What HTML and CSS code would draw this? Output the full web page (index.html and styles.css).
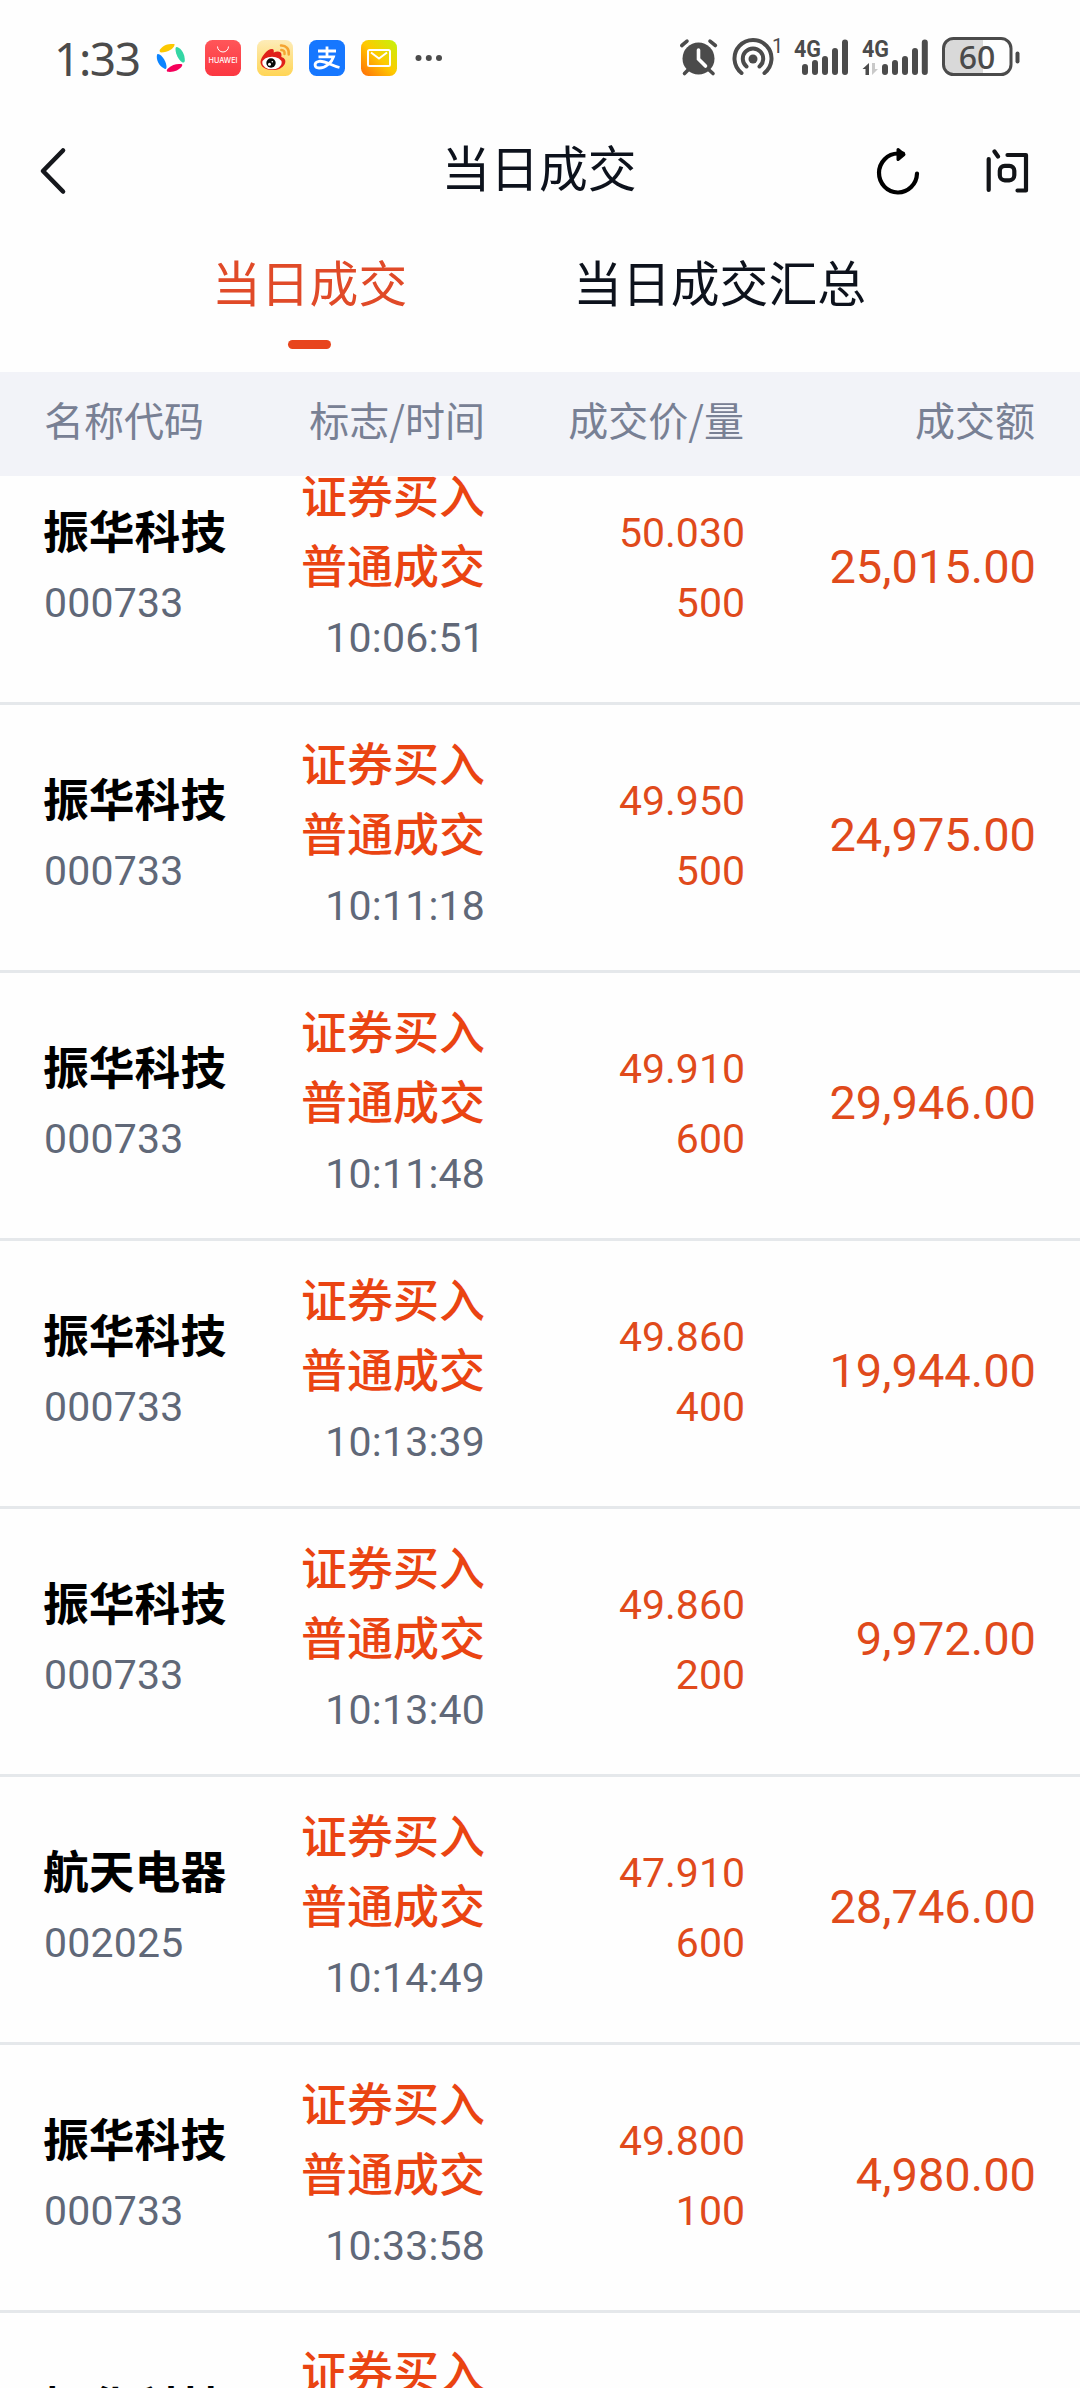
FILE: index.html
```html
<!DOCTYPE html>
<html lang="zh-CN">
<head>
<meta charset="utf-8">
<title>当日成交</title>
<link rel="stylesheet" href="styles.css">
</head>
<body>
<div class="screen">
  <div class="status">
    <div class="status-left">
      <span class="clock">1:33</span>
      <svg class="app app-round" width="32" height="36" viewBox="0 0 32 36">
        <path fill="#fcc800" d="M5 9.500C9 4.500 13 3.800 19.500 4L19.500 5C18.500 9 13.500 12 6 12.500C4.500 12 4.300 10.500 5 9.500z"/>
        <path fill="#33d6a4" d="M22 7C26.500 8.500 30 14 29.800 21C29 23.500 27 22.500 25.500 21C22 17.500 20.500 12 20.500 9C20.500 7.500 21 6.800 22 7z"/>
        <path fill="#f5005a" d="M27 26C24 30.500 18.500 32.500 12.500 31.800C11 31 12 29.500 13 28.500C17 24.500 21.500 23.500 26 24C27.500 24.300 27.500 25 27 26z"/>
        <path fill="#0b84ff" d="M2.500 14C5 13.500 9 18 10.800 23C11.800 26.500 12 29 10 29C5.500 27 1.800 22 1.800 17C1.800 15.500 2 14.500 2.500 14z"/>
      </svg>
      <svg class="app" width="36" height="36" viewBox="0 0 36 36">
        <defs><linearGradient id="red" x2="0" y2="1"><stop stop-color="#ff5659"/><stop offset="1" stop-color="#fb3741"/></linearGradient></defs>
        <rect width="36" height="36" rx="7.500" fill="url(#red)"/>
        <path d="M12.500 6.500a5.500 5.500 0 0 0 11 0" fill="none" stroke="#fff" stroke-width="1"/>
        <text x="18" y="23" class="brand" textLength="29" lengthAdjust="spacingAndGlyphs">HUAWEI</text>
      </svg>
      <svg class="app" width="36" height="36" viewBox="0 0 36 36">
        <defs><linearGradient id="cream" x2="0" y2="1"><stop stop-color="#fdecb8"/><stop offset="1" stop-color="#ffd555"/></linearGradient></defs>
        <rect width="36" height="36" rx="7.500" fill="url(#cream)"/>
        <path fill="#e01f19" d="M3.500 22C4 17 10 9 15 9C17 9 17 11 16.700 12.500C20 11 24.500 11 24.500 15L24.300 17C28 18 29.500 21 27.500 24.500C25 28.500 20 30.500 14.500 30C8 29.500 3.500 26.500 3.500 22z"/>
        <ellipse cx="15" cy="23" rx="9.700" ry="6.300" fill="#fff"/>
        <circle cx="14" cy="23" r="4.700" fill="#090909"/><circle cx="12.500" cy="24.200" r="1.500" fill="#fff"/><circle cx="15.300" cy="21.700" r=".8" fill="#fff"/>
        <g fill="none" stroke="#f5a431" stroke-width="2.500" stroke-linecap="round"><path d="M24 5.500c5-.3 8.500 3.500 7.700 9"/><path d="M24.300 10c2.400 0 3.600 1.600 3.200 4"/></g>
      </svg>
      <svg class="app" width="36" height="36" viewBox="0 0 36 36">
        <rect width="36" height="36" rx="7.500" fill="#1677ff"/>
        <path d="M9 11h18M18 6.500v10M9.500 16.800h15C23 22 16.500 28.300 10 28C5 27.800 4.500 22.300 10 21.300C16 20.500 22 25.300 30.500 27.500" fill="none" stroke="#fff" stroke-width="2.800"/>
      </svg>
      <svg class="app" width="36" height="36" viewBox="0 0 36 36">
        <defs><linearGradient id="sun" x1="0" y1="1" x2="1" y2="0"><stop offset=".08" stop-color="#ff7a08"/><stop offset=".5" stop-color="#ffc900"/><stop offset="1" stop-color="#c2f50c"/></linearGradient></defs>
        <rect width="36" height="36" rx="7.500" fill="url(#sun)"/>
        <rect x="7" y="10" width="22" height="16" rx="1.500" fill="none" stroke="#fff" stroke-width="2"/><path d="M10 12.500l8 6 8-6" fill="none" stroke="#fff" stroke-width="2"/>
      </svg>
      <svg class="more" width="28" height="8" viewBox="0 0 28 8"><g fill="#4b4b4b"><circle cx="3.500" cy="4" r="3"/><circle cx="13.800" cy="4" r="3"/><circle cx="24" cy="4" r="3"/></g></svg>
    </div>
    <svg class="status-right" width="344" height="44" viewBox="678 35 344 44">
      <g fill="none" stroke="#4b4b4b" stroke-linecap="round">
        <circle cx="699.500" cy="58.500" r="16" fill="#4b4b4b" stroke="none"/>
        <path stroke-width="3.600" d="M682.800 45.500l5.200-4.300M711 41.200l5.400 4.300M690 69l-4.500 4.500M709 69l5 4.500"/>
        <path stroke="#fff" stroke-width="3.600" d="M699.500 50v9l7 7"/>
        <circle cx="754" cy="59" r="4.500" fill="#4b4b4b" stroke="none"/>
        <path stroke-width="4" d="M742.500 73a18.500 18.500 0 1 1 23 0M747.500 66.500a10.200 10.200 0 1 1 13 0"/>
        <path stroke-width="6" d="M806 67v5M816 63v9M826 59v13M836 51v21M846 42.500v29.500M886 67v5M896 63v9M906 59v13M916 51v21M925.800 42.500v29.500"/>
      </g>
      <text x="773" y="53" class="tiny">1</text>
      <text x="795" y="56.500" class="net" textLength="27" lengthAdjust="spacingAndGlyphs">4G</text>
      <text x="863" y="56.500" class="net" textLength="27" lengthAdjust="spacingAndGlyphs">4G</text>
      <path fill="#4b4b4b" d="M870 63v12h-3.500v-6h-3z"/><path fill="#c9c9c9" d="M873 63v12l6-6h-3v-6z"/>
      <path fill="#d9d9d9" d="M984 39v36h-30a10 10 0 0 1-9.500-10V49a10 10 0 0 1 9.500-10z"/>
      <rect x="944.500" y="38.500" width="67.500" height="36" rx="10" fill="none" stroke="#4b4b4b" stroke-width="3"/>
      <rect x="1016.500" y="51.500" width="4" height="12" rx="2" fill="#4b4b4b"/>
      <text x="978" y="69" class="charge">60</text>
    </svg>
  </div>

  <header class="nav">
    <svg class="back" width="30" height="50" viewBox="0 0 30 50"><path d="M25 4.500L5 25l20 20.500" fill="none" stroke="#15171c" stroke-width="4.600" stroke-linecap="round" stroke-linejoin="round"/></svg>
    <h1 class="title">当日成交</h1>
    <div class="actions">
      <svg width="46" height="50" viewBox="0 0 46 50"><path d="M42 27.500A19 19.500 0 1 1 23 7.500h5" fill="none" stroke="#000" stroke-width="4.200" stroke-linecap="round"/><path d="M23 3.500L29 8.500L23 13.500z" fill="#000" stroke="#000" stroke-width="3" stroke-linejoin="round"/></svg>
      <svg width="46" height="50" viewBox="0 0 46 50"><g fill="none" stroke="#121417" stroke-width="4.200" stroke-linecap="round" stroke-linejoin="round"><path d="M4.700 13v31M10.500 5.500l3.500 5M23.500 9H42v35.500h-8.500"/><rect x="15.800" y="19.800" width="14.500" height="14.500" rx="5"/></g></svg>
    </div>
  </header>

  <nav class="tabs">
    <a class="tab active">当日成交</a>
    <a class="tab">当日成交汇总</a>
  </nav>

  <div class="grid thead"><span>名称代码</span><span>标志/时间</span><span>成交价/量</span><span>成交额</span></div>

  <main class="viewport">
    <div class="list">
      <div class="grid row"><div><b class="name">振华科技</b><span class="code">000733</span></div><div><span class="flag">证券买入</span><span class="flag">普通成交</span><span class="time">10:06:51</span></div><div class="num"><span>50.030</span><span>500</span></div><div class="sum">25,015.00</div></div>
      <div class="grid row"><div><b class="name">振华科技</b><span class="code">000733</span></div><div><span class="flag">证券买入</span><span class="flag">普通成交</span><span class="time">10:11:18</span></div><div class="num"><span>49.950</span><span>500</span></div><div class="sum">24,975.00</div></div>
      <div class="grid row"><div><b class="name">振华科技</b><span class="code">000733</span></div><div><span class="flag">证券买入</span><span class="flag">普通成交</span><span class="time">10:11:48</span></div><div class="num"><span>49.910</span><span>600</span></div><div class="sum">29,946.00</div></div>
      <div class="grid row"><div><b class="name">振华科技</b><span class="code">000733</span></div><div><span class="flag">证券买入</span><span class="flag">普通成交</span><span class="time">10:13:39</span></div><div class="num"><span>49.860</span><span>400</span></div><div class="sum">19,944.00</div></div>
      <div class="grid row"><div><b class="name">振华科技</b><span class="code">000733</span></div><div><span class="flag">证券买入</span><span class="flag">普通成交</span><span class="time">10:13:40</span></div><div class="num"><span>49.860</span><span>200</span></div><div class="sum">9,972.00</div></div>
      <div class="grid row"><div><b class="name">航天电器</b><span class="code">002025</span></div><div><span class="flag">证券买入</span><span class="flag">普通成交</span><span class="time">10:14:49</span></div><div class="num"><span>47.910</span><span>600</span></div><div class="sum">28,746.00</div></div>
      <div class="grid row"><div><b class="name">振华科技</b><span class="code">000733</span></div><div><span class="flag">证券买入</span><span class="flag">普通成交</span><span class="time">10:33:58</span></div><div class="num"><span>49.800</span><span>100</span></div><div class="sum">4,980.00</div></div>
      <div class="grid row"><div><b class="name">振华科技</b><span class="code"></span></div><div><span class="flag">证券买入</span><span class="flag"></span><span class="time"></span></div><div></div><div></div></div>
    </div>
  </main>
</div>
</body>
</html>
```
FILE: styles.css
```css
* { box-sizing: border-box; }
body { margin: 0; background: #fefefe; font-family: "Noto Sans CJK SC", sans-serif; }
.screen { width: 1080px; height: 2388px; overflow: hidden; display: flex; flex-direction: column; }

.status { height: 120px; flex: none; display: flex; justify-content: space-between; padding: 35px 59px 0 54px; }
.status-left { display: flex; height: 46px; align-items: center; }
.clock { width: 101px; font: 400 46px/44px "Noto Sans", sans-serif; color: #4b4b4b; letter-spacing: -1.4px; }
.app { margin-right: 16px; }
.app-round { margin-right: 18px; }
.more { margin-left: 2px; }
.brand { font: 500 7px Inter, sans-serif; fill: #fff; text-anchor: middle; }
.tiny { font: 400 20px Roboto, sans-serif; fill: #4b4b4b; }
.net { font: 700 24px Roboto, sans-serif; fill: #4b4b4b; }
.charge { font: 500 32px "Noto Sans", sans-serif; fill: #4b4b4b; text-anchor: middle; }

.nav { height: 104px; flex: none; display: grid; grid-template-columns: 1fr auto 1fr; align-items: center; padding: 0 50px 3px 38px; }
.title { margin: 0 0 9px 10px; font-size: 48.8px; font-weight: 400; line-height: 70px; color: #0d121c; }
.actions { display: flex; justify-content: flex-end; gap: 63px; }

.tabs { height: 148px; flex: none; display: flex; justify-content: center; gap: 166px; padding: 22px 2px 0 0; font-size: 48.8px; line-height: 70px; color: #0d121c; }
.tab { display: flex; flex-direction: column; align-items: center; }
.tab.active { color: #e04a28; }
.tab.active::after { content: ""; width: 43px; height: 9px; margin-top: 24px; border-radius: 5px; background: #e8451d; }

.grid { display: grid; grid-template-columns: 220px 221px 260px 291px; padding: 0 44px; align-items: center; text-align: right; }
.grid > :first-child { text-align: left; }
.thead { height: 104px; flex: none; padding-bottom: 10px; background: #f2f3f8; color: #788094; font-size: 40px; line-height: 60px; }
.thead > :nth-child(n+3) { margin-right: 1px; }

.viewport { flex: 1; overflow: hidden; }
.list { margin-top: -39px; }
.row { height: 268px; padding-bottom: 3px; border-bottom: 3px solid #e5e8eb; }
.row span, .row b { display: block; height: 70px; line-height: 71px; white-space: nowrap; }
.row .name { margin-left: -1px; font-size: 45.8px; line-height: 62px; }
.row .flag { font-size: 46px; line-height: 61px; }
.name { font-weight: 700; color: #000; }
.code, .time, .num { font-family: Roboto, sans-serif; font-size: 41px; }
.code, .time { color: #606878; letter-spacing: .2px; }
.flag { font-weight: 500; color: #ea4412; }
.num, .sum { color: #e04a1b; }
.sum { padding-bottom: 3px; font: 400 47px Roboto, sans-serif; }
```
